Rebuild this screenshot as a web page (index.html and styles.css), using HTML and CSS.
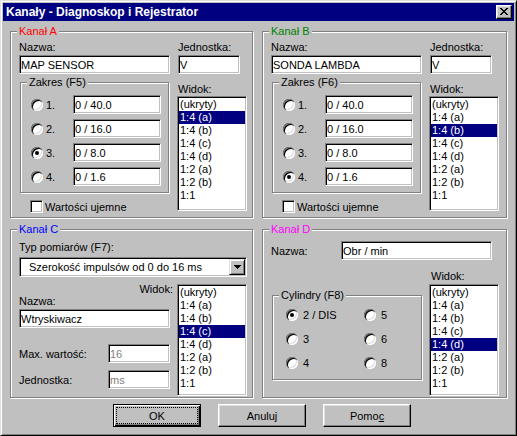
FILE: index.html
```html
<!DOCTYPE html>
<html lang="pl">
<head>
    <meta charset="UTF-8">
    <title>Kanały - Diagnoskop i Rejestrator</title>
    <link rel="stylesheet" href="styles.css">
</head>
<body>
<div class="window">
    <div class="titlebar">
        <span class="title">Kanały - Diagnoskop i Rejestrator</span>
        <button class="close-btn" type="button">
            <svg width="8" height="7" viewBox="0 0 8 7" shape-rendering="crispEdges"><path d="M0 0h2v1H0zM6 0h2v1H6zM1 1h2v1H1zM5 1h2v1H5zM2 2h4v1H2zM3 3h2v1H3zM2 4h4v1H2zM1 5h2v1H1zM5 5h2v1H5zM0 6h2v1H0zM6 6h2v1H6z"/></svg>
        </button>
    </div>

    <div class="channels">
        <!-- Kanal A -->
        <div class="group chan">
            <span class="legend red">Kanał A</span>
            <div class="chan-cols">
                <div class="col-left">
                    <label class="lbl">Nazwa:</label>
                    <input class="field name" value="MAP SENSOR" readonly>
                    <div class="group range">
                        <span class="legend">Zakres (F5)</span>
                        <div class="range-row"><span class="radio"></span><span class="rlabel">1.</span><input class="field range-val" value="0 / 40.0" readonly></div>
                        <div class="range-row"><span class="radio"></span><span class="rlabel">2.</span><input class="field range-val" value="0 / 16.0" readonly></div>
                        <div class="range-row"><span class="radio on"></span><span class="rlabel">3.</span><input class="field range-val" value="0 / 8.0" readonly></div>
                        <div class="range-row"><span class="radio"></span><span class="rlabel">4.</span><input class="field range-val" value="0 / 1.6" readonly></div>
                    </div>
                    <div class="check-row"><span class="check"></span>Wartości ujemne</div>
                </div>
                <div class="col-right">
                    <label class="lbl">Jednostka:</label>
                    <input class="field unit" value="V" readonly>
                    <label class="lbl widok">Widok:</label>
                    <div class="listbox">
                        <div>(ukryty)</div>
                        <div class="sel">1:4 (a)</div>
                        <div>1:4 (b)</div>
                        <div>1:4 (c)</div>
                        <div>1:4 (d)</div>
                        <div>1:2 (a)</div>
                        <div>1:2 (b)</div>
                        <div>1:1</div>
                    </div>
                </div>
            </div>
        </div>

        <!-- Kanal B -->
        <div class="group chan">
            <span class="legend green">Kanał B</span>
            <div class="chan-cols">
                <div class="col-left">
                    <label class="lbl">Nazwa:</label>
                    <input class="field name" value="SONDA LAMBDA" readonly>
                    <div class="group range">
                        <span class="legend">Zakres (F6)</span>
                        <div class="range-row"><span class="radio"></span><span class="rlabel">1.</span><input class="field range-val" value="0 / 40.0" readonly></div>
                        <div class="range-row"><span class="radio"></span><span class="rlabel">2.</span><input class="field range-val" value="0 / 16.0" readonly></div>
                        <div class="range-row"><span class="radio"></span><span class="rlabel">3.</span><input class="field range-val" value="0 / 8.0" readonly></div>
                        <div class="range-row"><span class="radio on"></span><span class="rlabel">4.</span><input class="field range-val" value="0 / 1.6" readonly></div>
                    </div>
                    <div class="check-row"><span class="check"></span>Wartości ujemne</div>
                </div>
                <div class="col-right">
                    <label class="lbl">Jednostka:</label>
                    <input class="field unit" value="V" readonly>
                    <label class="lbl widok">Widok:</label>
                    <div class="listbox">
                        <div>(ukryty)</div>
                        <div>1:4 (a)</div>
                        <div class="sel">1:4 (b)</div>
                        <div>1:4 (c)</div>
                        <div>1:4 (d)</div>
                        <div>1:2 (a)</div>
                        <div>1:2 (b)</div>
                        <div>1:1</div>
                    </div>
                </div>
            </div>
        </div>

        <!-- Kanal C -->
        <div class="group chan chan-low">
            <span class="legend blue">Kanał C</span>
            <label class="lbl">Typ pomiarów (F7):</label>
            <div class="combo">
                <span class="combo-text">Szerokość impulsów od 0 do 16 ms</span>
                <span class="drop-btn">
                    <svg width="7" height="4" viewBox="0 0 7 4" shape-rendering="crispEdges"><path d="M0 0h7v1H0zM1 1h5v1H1zM2 2h3v1H2zM3 3h1v1H3z"/></svg>
                </span>
            </div>
            <div class="c-body">
                <div class="col-left">
                    <label class="lbl widok-c">Widok:</label>
                    <label class="lbl nazwa-c">Nazwa:</label>
                    <input class="field name" value="Wtryskiwacz" readonly>
                    <div class="pair max-row">
                        <span class="pair-lbl">Max. wartość:</span>
                        <input class="field unit dim" value="16" disabled>
                    </div>
                    <div class="pair unit-row">
                        <span class="pair-lbl">Jednostka:</span>
                        <input class="field unit dim" value="ms" disabled>
                    </div>
                </div>
                <div class="listbox short">
                    <div>(ukryty)</div>
                    <div>1:4 (a)</div>
                    <div>1:4 (b)</div>
                    <div class="sel">1:4 (c)</div>
                    <div>1:4 (d)</div>
                    <div>1:2 (a)</div>
                    <div>1:2 (b)</div>
                    <div>1:1</div>
                </div>
            </div>
        </div>

        <!-- Kanal D -->
        <div class="group chan chan-low">
            <span class="legend magenta">Kanał D</span>
            <div class="pair">
                <span class="d-lbl">Nazwa:</span>
                <input class="field name" value="Obr / min" readonly>
            </div>
            <div class="d-body">
                <div class="col-left">
                    <div class="group cyl">
                        <span class="legend">Cylindry (F8)</span>
                        <div class="cyl-grid">
                            <div class="cyl-opt"><span class="radio on"></span>2 / DIS</div>
                            <div class="cyl-opt"><span class="radio"></span>5</div>
                            <div class="cyl-opt"><span class="radio"></span>3</div>
                            <div class="cyl-opt"><span class="radio"></span>6</div>
                            <div class="cyl-opt"><span class="radio"></span>4</div>
                            <div class="cyl-opt"><span class="radio"></span>8</div>
                        </div>
                    </div>
                </div>
                <div class="col-right">
                    <label class="lbl widok-d">Widok:</label>
                    <div class="listbox short">
                        <div>(ukryty)</div>
                        <div>1:4 (a)</div>
                        <div>1:4 (b)</div>
                        <div>1:4 (c)</div>
                        <div class="sel">1:4 (d)</div>
                        <div>1:2 (a)</div>
                        <div>1:2 (b)</div>
                        <div>1:1</div>
                    </div>
                </div>
            </div>
        </div>
    </div>

    <div class="buttons">
        <button class="btn default" type="button">OK</button>
        <button class="btn" type="button">Anuluj</button>
        <button class="btn" type="button">Pomo<u>c</u></button>
    </div>
</div>
</body>
</html>
```

FILE: styles.css
```css
body {
    margin: 0;
    background: #c0c0c0;
    font-family: "Liberation Sans", Arial, sans-serif;
    font-size: 11px;
    color: #000;
}
.window {
    width: 517px;
    height: 436px;
    box-sizing: border-box;
    border: 1px solid;
    border-color: #dfdfdf #000 #000 #dfdfdf;
    box-shadow: inset 1px 1px 0 #fff, inset -1px -1px 0 #808080;
    padding: 2px;
    background: #c0c0c0;
}
.titlebar {
    height: 18px;
    background: #000080;
    color: #fff;
    display: flex;
    align-items: center;
    justify-content: space-between;
    padding: 0 2px 0 3px;
}
.title {
    font-weight: bold;
    font-size: 12px;
}
.close-btn {
    width: 16px;
    height: 14px;
    padding: 0 1px 1px 0;
    display: flex;
    align-items: center;
    justify-content: center;
    background: #c0c0c0;
    border: 1px solid;
    border-color: #fff #000 #000 #fff;
    box-shadow: inset -1px -1px 0 #808080, inset 1px 1px 0 #dfdfdf;
}
.close-btn svg { display: block; }

/* group boxes */
.channels {
    display: grid;
    grid-template-columns: 243px 245px;
    grid-template-rows: 187px 169px;
    column-gap: 9px;
    row-gap: 11px;
    padding: 10px 0 0 7px;
}
.group {
    position: relative;
    box-sizing: border-box;
    border: 1px solid #808080;
    box-shadow: 1px 1px 0 #fff, inset 1px 1px 0 #fff;
}
.legend {
    position: absolute;
    top: -7px;
    left: 6px;
    padding: 0 2px;
    line-height: 13px;
    background: #c0c0c0;
    white-space: nowrap;
}
.red { color: #ff0000; }
.green { color: #008000; }
.blue { color: #0000ff; }
.magenta { color: #ff00ff; }

.chan { padding: 9px 0 0 8px; }
.chan-low { padding-top: 11px; }
.chan-cols { display: flex; gap: 8px; }
.col-left { width: 151px; flex: none; }
.col-right { flex: none; }

.lbl {
    display: block;
    line-height: 13px;
    height: 13px;
    white-space: nowrap;
}
.field {
    display: block;
    box-sizing: border-box;
    height: 19px;
    margin: 1px 0 0;
    padding: 0 1px;
    border: 1px solid;
    border-color: #808080 #fff #fff #808080;
    box-shadow: inset 1px 1px 0 #000, inset -1px -1px 0 #c0c0c0;
    background: #fff;
    font: inherit;
    color: #000;
    outline: none;
}
.field.name { width: 151px; }
.field.unit { width: 62px; }
.field.dim { color: #808080; opacity: 1; }

/* Zakres */
.range {
    width: 149px;
    height: 111px;
    margin: 8px 0 0 1px;
    padding: 12px 0 0 10px;
}
.range-row {
    display: flex;
    align-items: center;
    height: 19px;
    margin-bottom: 5px;
}
.radio {
    position: relative;
    flex: none;
    width: 12px;
    height: 12px;
    border-radius: 50%;
    background: #fff;
    box-shadow: inset 1px 1px 0 #808080, inset 2px 2px 0 #000,
                inset -1px -1px 0 #fff, inset -2px -2px 0 #dfdfdf;
}
.radio.on::after {
    content: "";
    position: absolute;
    left: 4px;
    top: 4px;
    width: 4px;
    height: 4px;
    border-radius: 50%;
    background: #000;
}
.range-row .radio { margin-right: 3px; }
.rlabel { width: 27px; }
.field.range-val { width: 88px; margin: 0; }

.check-row {
    display: flex;
    align-items: center;
    height: 13px;
    margin-top: 7px;
    white-space: nowrap;
}
.check {
    width: 13px;
    height: 13px;
    box-sizing: border-box;
    margin: 0 2px 0 11px;
    border: 1px solid;
    border-color: #808080 #fff #fff #808080;
    box-shadow: inset 1px 1px 0 #000, inset -1px -1px 0 #c0c0c0;
    background: #fff;
}

.widok { margin-top: 9px; }
.listbox {
    box-sizing: border-box;
    width: 70px;
    height: 115px;
    margin-left: -1px;
    padding: 1px;
    border: 1px solid;
    border-color: #808080 #fff #fff #808080;
    box-shadow: inset 1px 1px 0 #000, inset -1px -1px 0 #c0c0c0;
    background: #fff;
    line-height: 13px;
}
.listbox div { padding-left: 1px; white-space: nowrap; }
.listbox .sel { background: #000080; color: #fff; }
.listbox.short { height: 112px; margin-left: 0; }

/* Kanal C */
.combo {
    box-sizing: border-box;
    width: 228px;
    height: 20px;
    margin-top: 3px;
    padding: 1px;
    display: flex;
    align-items: center;
    justify-content: space-between;
    border: 1px solid;
    border-color: #808080 #fff #fff #808080;
    box-shadow: inset 1px 1px 0 #000, inset -1px -1px 0 #c0c0c0;
    background: #fff;
}
.combo-text { padding-left: 8px; white-space: nowrap; }
.drop-btn {
    box-sizing: border-box;
    width: 16px;
    height: 16px;
    display: flex;
    align-items: center;
    justify-content: center;
    background: #c0c0c0;
    border: 1px solid;
    border-color: #dfdfdf #000 #000 #dfdfdf;
    box-shadow: inset 1px 1px 0 #fff, inset -1px -1px 0 #808080;
}
.drop-btn svg { display: block; }
.c-body {
    display: flex;
    gap: 7px;
    margin-top: 7px;
}
.widok-c {
    margin: -1px -3px 0 0;
    text-align: right;
}
.nazwa-c { margin-top: -1px; }
.pair {
    display: flex;
    align-items: center;
}
.pair .field { margin: 0; }
.pair-lbl { width: 89px; white-space: nowrap; }
.max-row { margin-top: 16px; }
.unit-row { margin-top: 7px; }

/* Kanal D */
.d-lbl { width: 70px; }
.d-body { display: flex; gap: 7px; }
.cyl {
    width: 150px;
    height: 85px;
    margin: 35px 0 0 1px;
    padding: 9px 0 0 13px;
}
.cyl-grid {
    display: grid;
    grid-template-columns: 78px 50px;
    grid-auto-rows: 19px;
    row-gap: 5px;
}
.cyl-opt {
    display: flex;
    align-items: center;
    white-space: nowrap;
}
.cyl-opt .radio { margin-right: 5px; }
.widok-d { margin: 10px 0 1px 2px; }

/* buttons */
.buttons {
    display: flex;
    gap: 17px;
    margin-top: 6px;
    padding-left: 110px;
}
.btn {
    box-sizing: border-box;
    width: 88px;
    height: 23px;
    padding: 0;
    font: inherit;
    color: #000;
    background: #c0c0c0;
    border: 1px solid;
    border-color: #fff #000 #000 #fff;
    box-shadow: inset -1px -1px 0 #808080, inset 1px 1px 0 #dfdfdf;
}
.btn.default {
    border-color: #000;
    box-shadow: inset 1px 1px 0 #fff, inset -1px -1px 0 #000, inset -2px -2px 0 #808080;
    outline: 1px dotted #000;
    outline-offset: -4px;
}
```
